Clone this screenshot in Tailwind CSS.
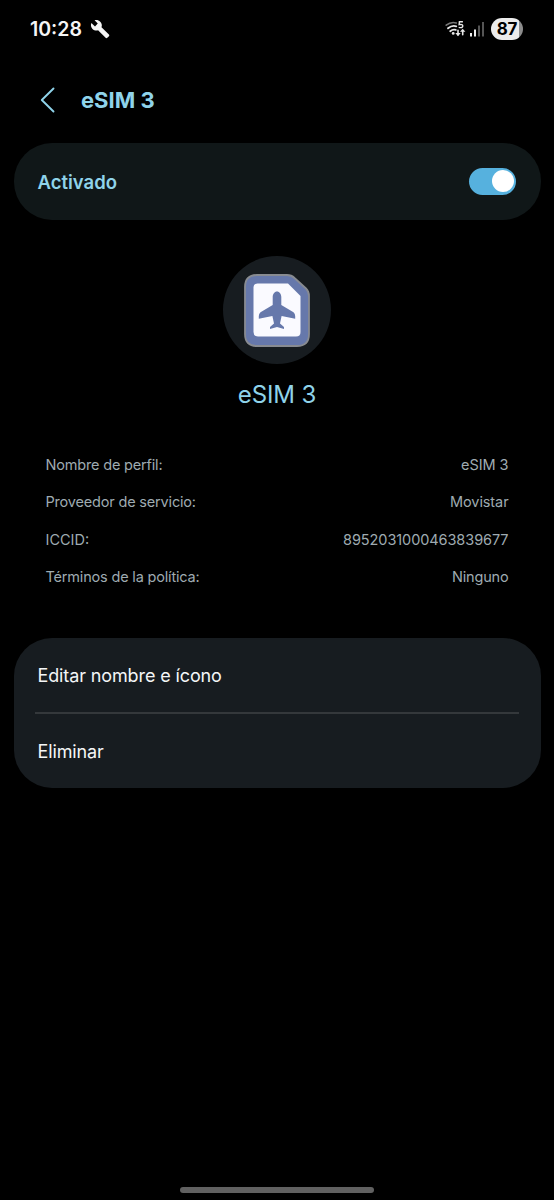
<!DOCTYPE html>
<html lang="es">
<head>
<meta charset="utf-8">
<title>eSIM 3</title>
<script src="https://cdn.jsdelivr.net/npm/@tailwindcss/browser@4"></script>
</head>
<body class="bg-black">
<div class="w-[554px] h-[1200px] bg-black flex flex-col overflow-hidden font-['Inter','Roboto',sans-serif] whitespace-nowrap">
  <header class="h-[58px] flex items-center justify-between pl-[30px] pr-[31px] text-[#f5f5f5]">
    <div class="flex items-center gap-[8px]">
      <span class="pt-[2px] text-[19.5px] font-semibold leading-none">10:28</span>
      <svg class="w-[20px] h-[20px]" viewBox="0 0 24 24" fill="currentColor"><path d="M22.700 18.700l-8.900-8.900c.9-2.300.4-4.700-1.500-6.600-1.900-1.900-4.500-2.300-6.800-1.600L9.300 5.400 6 8.900 1.700 4.900C.6 7.200 1.100 10.100 3 12c1.900 1.900 4.500 2.300 6.700 1.600l9 9c.5.6 1.500.6 2.100 0l1.900-1.800c.6-.6.6-1.500 0-2.100z"/></svg>
    </div>
    <div class="flex items-center">
      <svg class="w-[21px] h-[18px]" viewBox="0 0 21 18" fill="none" stroke="#e8e8e8" stroke-linecap="round">
        <path d="M1.200 5.200Q6 1.300 11.300 2.900" stroke="#777" stroke-width="1.600"/>
        <path d="M3 8.300Q7 4.900 11.300 6.300M5.200 11.200Q8 8.900 10.800 9.900" stroke-width="1.800"/>
        <circle cx="8.200" cy="13.400" r="1.400" fill="#e8e8e8" stroke="none"/>
        <path d="M17.900 1.800h-3.500l-.3 2.800q3.700-.6 3.700 1.500t-4.100 1.300" stroke-width="1.400" stroke-linecap="butt"/>
        <path d="M13 10.200v4.500M17.700 14.700v-4" stroke-width="1.600"/>
        <path d="M10.300 13h5.400L13 16.200ZM15 11.800h5.400L17.700 8.700Z" fill="#e8e8e8" stroke="none"/>
      </svg>
      <svg class="w-[15px] h-[16px] ml-[4px]" viewBox="0 0 15 16"><rect y="12" width="2" height="3.500" fill="#eee"/><rect x="4" y="8.500" width="2" height="7" fill="#eee"/><rect x="8" y="4.500" width="2" height="11" fill="#555"/><rect x="12" y="1" width="2" height="14.500" fill="#555"/></svg>
      <div class="ml-[6px] w-[32px] h-[22px] rounded-full bg-linear-to-r from-[#ececec] from-[86%] to-[#8c8c8c] to-[86%] flex items-center justify-center text-black text-[17px] font-bold leading-none tracking-[-0.3px]">87</div>
    </div>
  </header>

  <div class="h-[84px] flex items-center pl-[40px] text-[#8fd3ea]">
    <svg class="w-[15px] h-[26px]" viewBox="0 0 15 26" fill="none" stroke="currentColor" stroke-width="1.900" stroke-linecap="round" stroke-linejoin="round"><path d="M13.500 1.500 1.800 13l11.700 11.500"/></svg>
    <h1 class="ml-[26px] text-[22px] font-bold leading-none">eSIM 3</h1>
  </div>

  <section class="mt-[0.5px] mx-[13.5px] h-[77.5px] w-[527px] rounded-[38px] bg-[#101718] flex items-center justify-between pl-[24px] pr-[24.5px]">
    <span class="pt-[2px] text-[18.5px] font-semibold leading-none text-[#8fd3ea]">Activado</span>
    <span class="w-[47px] h-[27px] rounded-full bg-[#56b1de] flex items-center justify-end pr-[2px]"><span class="size-[22px] rounded-full bg-white"></span></span>
  </section>

  <div class="mt-[36px] flex flex-col items-center">
    <div class="size-[108px] rounded-full bg-[#171c20] flex items-center justify-center">
      <svg class="w-[66px] h-[73px]" viewBox="0 0 66 73">
        <path d="M13 1H43Q47.500 1 50.500 4L62 14.500Q65 17.500 65 22V60Q65 72 53 72H13Q1 72 1 60V13Q1 1 13 1Z" fill="#6678ab" stroke="#888b91" stroke-width="1.800"/>
        <path d="M13.500 9.500H44L56.500 22V58Q56.500 62.500 52 62.500H14Q9.500 62.500 9.500 58V13.500Q9.500 9.500 13.500 9.500Z" fill="#fafaff"/>
        <path d="M33 17.500C35.500 17.500 37.300 20 37.300 23V31L49.500 38.200Q51.200 39.600 51.200 42V44.800L37.600 42L36 49.500L40 53V55L33 53L26 55V53L30 49.500L28.400 42L14.800 44.800V42Q14.800 39.600 16.500 38.200L28.700 31V23C28.700 20 30.500 17.500 33 17.500Z" fill="#6678ab"/>
      </svg>
    </div>
    <h2 class="mt-[13px] h-[36px] leading-[36px] text-[24px] font-normal text-[#8fd3ea] tracking-[-0.1px]">eSIM 3</h2>
  </div>

  <dl class="mt-[33px] h-[150px] grid grid-rows-4 pl-[45.5px] pr-[45.5px] text-[14.5px] leading-none text-[#9fabb1] tracking-[-0.18px]">
    <div class="flex items-center justify-between"><dt>Nombre de perfil:</dt><dd class="tracking-[-0.05px]">eSIM 3</dd></div>
    <div class="flex items-center justify-between"><dt>Proveedor de servicio:</dt><dd class="tracking-[-0.1px]">Movistar</dd></div>
    <div class="flex items-center justify-between"><dt class="tracking-normal">ICCID:</dt><dd class="tracking-[-0.08px]">8952031000463839677</dd></div>
    <div class="flex items-center justify-between"><dt>Términos de la política:</dt><dd>Ninguno</dd></div>
  </dl>

  <section class="mt-[41.5px] mx-[13.5px] w-[527px] h-[150.5px] rounded-[38px] bg-[#171c20] px-[21.5px] flex flex-col text-[18px] leading-none text-[#f4f6f7] tracking-[-0.12px]">
    <div class="h-[76.5px] pl-[2.500px] pt-[3px] flex items-center border-b-2 border-[#34383b]"><span>Editar nombre e ícono</span></div>
    <div class="h-[74px] pl-[2.500px] pt-[1px] flex items-center"><span>Eliminar</span></div>
  </section>

  <div class="mt-auto mb-[7px] self-center w-[194px] h-[6px] rounded-full bg-[#616161]"></div>
</div>
</body>
</html>
